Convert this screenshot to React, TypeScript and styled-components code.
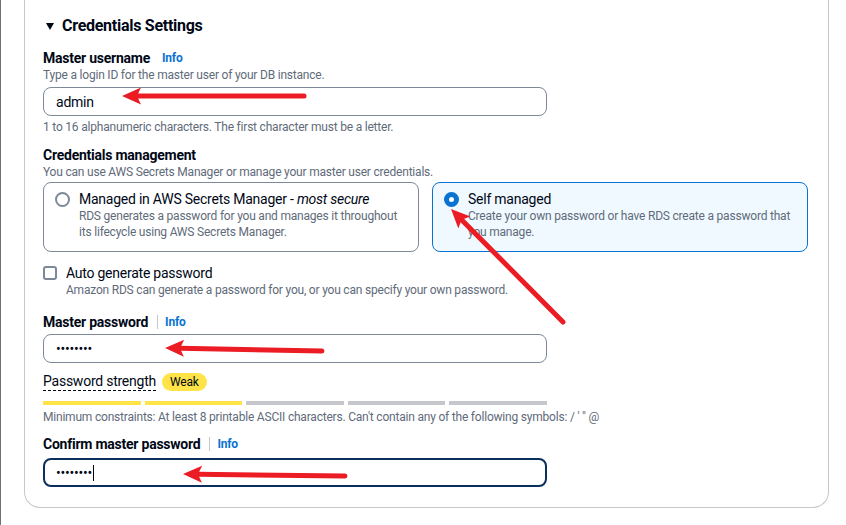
import React from "react";
import styled, { createGlobalStyle } from "styled-components";

const FONT = `Roboto, "Noto Sans", Arial, sans-serif`;

const GlobalStyle = createGlobalStyle`
  html, body { margin: 0; padding: 0; background: #ffffff; }
  body { font-family: ${FONT}; color: #000716; }
  * { box-sizing: border-box; letter-spacing: -0.017em; }
`;

const Page = styled.div`
  position: relative;
  width: 846px;
  height: 525px;
  border-left: 1px solid #707070;
  padding: 0 17px 0 23px;
  overflow: hidden;
`;

const Card = styled.section`
  border: 1px solid #c6c6cd;
  border-top: none;
  border-radius: 0 0 16px 16px;
  padding: 15px 18px 20px;
`;

const Heading = styled.h2`
  margin: 0 0 12px;
  display: flex;
  align-items: center;
  gap: 8px;
  font-size: 16px;
  line-height: 22px;
  font-weight: 700;
`;

const Triangle = styled.span`
  width: 0;
  height: 0;
  margin-left: 3px;
  border-left: 4px solid transparent;
  border-right: 4px solid transparent;
  border-top: 7px solid #000716;
`;

const Field = styled.div<{ $top?: number }>`
  margin-top: ${(p) => p.$top ?? 0}px;
  display: flex;
  flex-direction: column;
`;

const LabelRow = styled.div`
  display: flex;
  align-items: center;
  height: 18px;
`;

const Label = styled.label`
  font-size: 14px;
  line-height: 18px;
  font-weight: 700;
  color: #000716;
`;

const Separator = styled.span`
  width: 1px;
  height: 14px;
  background: #c6c6cd;
  margin: 0 7px 0 9px;
`;

const InfoLink = styled.a<{ $plain?: boolean }>`
  font-size: 12px;
  font-weight: 700;
  color: #0972d3;
  text-decoration: none;
  margin-left: ${(p) => (p.$plain ? 12 : 0)}px;
`;

const Desc = styled.div<{ $top?: number; $indent?: number }>`
  font-size: 12px;
  line-height: 16px;
  color: #5f6b7a;
  margin-top: ${(p) => p.$top ?? 0}px;
  padding-left: ${(p) => p.$indent ?? 0}px;
`;

const InputWrap = styled.div<{ $top?: number }>`
  position: relative;
  width: 504px;
  margin-top: ${(p) => p.$top ?? 4}px;
`;

const TextInput = styled.input<{ $focused?: boolean }>`
  display: block;
  width: 100%;
  height: 29px;
  border: ${(p) => (p.$focused ? "2px solid #0b2f5c" : "1px solid #7d8998")};
  border-radius: 8px;
  padding: 0 ${(p) => (p.$focused ? 11 : 12)}px;
  font-family: ${FONT};
  font-size: 14px;
  color: #000716;
  background: #ffffff;
  outline: none;
`;

const TextCaret = styled.span`
  position: absolute;
  left: 50px;
  top: 7px;
  width: 1px;
  height: 16px;
  background: #000716;
`;

const TileGrid = styled.div`
  display: grid;
  grid-template-columns: 376px 376px;
  gap: 13px;
  margin-top: 2px;
`;

const Tile = styled.div<{ $selected?: boolean }>`
  display: flex;
  gap: 9px;
  padding: 7px 11px 11px;
  border: 1px solid ${(p) => (p.$selected ? "#0972d3" : "#7d8998")};
  border-radius: 8px;
  background: ${(p) => (p.$selected ? "#f0f9ff" : "#ffffff")};
`;

const Radio = styled.span<{ $checked?: boolean }>`
  flex: none;
  width: 15px;
  height: 15px;
  margin-top: 2px;
  border-radius: 50%;
  background: #ffffff;
  border: ${(p) => (p.$checked ? "5px solid #0972d3" : "2px solid #7d8998")};
`;

const TileBody = styled.div`
  display: flex;
  flex-direction: column;
`;

const TileTitle = styled.div`
  font-size: 14px;
  line-height: 18px;
  color: #000716;
  white-space: nowrap;
`;

const TileDesc = styled.div`
  font-size: 12px;
  line-height: 16px;
  color: #5f6b7a;
  white-space: nowrap;
`;

const CheckRow = styled.div`
  display: flex;
  align-items: center;
  gap: 9px;
  margin-top: 12px;
  height: 18px;
`;

const CheckBox = styled.span`
  width: 14px;
  height: 14px;
  border: 2px solid #7d8998;
  border-radius: 3px;
`;

const CheckLabel = styled.span`
  font-size: 14px;
  line-height: 18px;
`;

const StrengthRow = styled.div`
  display: flex;
  align-items: center;
  gap: 6px;
  margin-top: 10px;
  height: 18px;
`;

const StrengthLabel = styled.span`
  font-size: 14px;
  line-height: 17px;
  border-bottom: 1px dashed #000716;
`;

const Badge = styled.span`
  height: 18px;
  line-height: 18px;
  padding: 0 8px;
  border-radius: 9px;
  background: #ffe347;
  font-size: 12px;
  color: #000716;
`;

const Bars = styled.div`
  display: grid;
  grid-template-columns: repeat(5, 1fr);
  gap: 4px;
  width: 504px;
  margin-top: 10px;
`;

const Bar = styled.span<{ $on?: boolean }>`
  height: 4px;
  background: ${(p) => (p.$on ? "#ffe347" : "#c6c6cd")};
`;

const Overlay = styled.svg`
  position: absolute;
  top: 0;
  left: -1px;
  pointer-events: none;
`;

type Pt = [number, number];

const Arrow: React.FC<{ from: Pt; to: Pt }> = ({ from, to }) => {
  const [x1, y1] = from;
  const [x2, y2] = to;
  const dx = x2 - x1;
  const dy = y2 - y1;
  const len = Math.hypot(dx, dy);
  const ux = dx / len;
  const uy = dy / len;
  const px = -uy;
  const py = ux;
  const headLen = 19;
  const half = 8.5;
  const bx = x2 - ux * headLen;
  const by = y2 - uy * headLen;
  const nx = x2 - ux * (headLen - 4);
  const ny = y2 - uy * (headLen - 4);
  const pts = [
    [x2, y2],
    [bx + px * half, by + py * half],
    [nx, ny],
    [bx - px * half, by - py * half],
  ]
    .map((p) => p.join(","))
    .join(" ");
  return (
    <g>
      <line x1={x1} y1={y1} x2={nx} y2={ny} stroke="#ec1c24" strokeWidth={5} strokeLinecap="round" />
      <polygon points={pts} fill="#ec1c24" />
    </g>
  );
};

export default function App() {
  return (
    <>
      <GlobalStyle />
      <Page>
        <Card>
          <Heading>
            <Triangle />
            Credentials Settings
          </Heading>

          <Field>
            <LabelRow>
              <Label>Master username</Label>
              <InfoLink $plain>Info</InfoLink>
            </LabelRow>
            <Desc>Type a login ID for the master user of your DB instance.</Desc>
            <InputWrap>
              <TextInput type="text" defaultValue="admin" readOnly />
            </InputWrap>
            <Desc $top={3}>1 to 16 alphanumeric characters. The first character must be a letter.</Desc>
          </Field>

          <Field $top={11}>
            <LabelRow>
              <Label>Credentials management</Label>
            </LabelRow>
            <Desc>You can use AWS Secrets Manager or manage your master user credentials.</Desc>
            <TileGrid>
              <Tile>
                <Radio />
                <TileBody>
                  <TileTitle>
                    Managed in AWS Secrets Manager - <em>most secure</em>
                  </TileTitle>
                  <TileDesc>
                    RDS generates a password for you and manages it throughout
                    <br />
                    its lifecycle using AWS Secrets Manager.
                  </TileDesc>
                </TileBody>
              </Tile>
              <Tile $selected>
                <Radio $checked />
                <TileBody>
                  <TileTitle>Self managed</TileTitle>
                  <TileDesc>
                    Create your own password or have RDS create a password that
                    <br />
                    you manage.
                  </TileDesc>
                </TileBody>
              </Tile>
            </TileGrid>
          </Field>

          <CheckRow>
            <CheckBox />
            <CheckLabel>Auto generate password</CheckLabel>
          </CheckRow>
          <Desc $indent={23}>Amazon RDS can generate a password for you, or you can specify your own password.</Desc>

          <Field $top={15}>
            <LabelRow>
              <Label>Master password</Label>
              <Separator />
              <InfoLink>Info</InfoLink>
            </LabelRow>
            <InputWrap $top={3}>
              <TextInput type="password" defaultValue="abcdefgh" readOnly />
            </InputWrap>
            <StrengthRow>
              <StrengthLabel>Password strength</StrengthLabel>
              <Badge>Weak</Badge>
            </StrengthRow>
            <Bars>
              <Bar $on />
              <Bar $on />
              <Bar />
              <Bar />
              <Bar />
            </Bars>
            <Desc $top={4}>
              Minimum constraints: At least 8 printable ASCII characters. Can't contain any of the following symbols: / ' " @
            </Desc>
          </Field>

          <Field $top={10}>
            <LabelRow>
              <Label>Confirm master password</Label>
              <Separator />
              <InfoLink>Info</InfoLink>
            </LabelRow>
            <InputWrap $top={5}>
              <TextInput type="password" defaultValue="abcdefgh" readOnly $focused />
              <TextCaret />
            </InputWrap>
          </Field>
        </Card>

        <Overlay width={846} height={525} viewBox="0 0 846 525">
          <Arrow from={[304, 96]} to={[122, 96]} />
          <Arrow from={[563, 322]} to={[451, 209]} />
          <Arrow from={[322, 351]} to={[165, 348]} />
          <Arrow from={[345, 476]} to={[183, 474]} />
        </Overlay>
      </Page>
    </>
  );
}
